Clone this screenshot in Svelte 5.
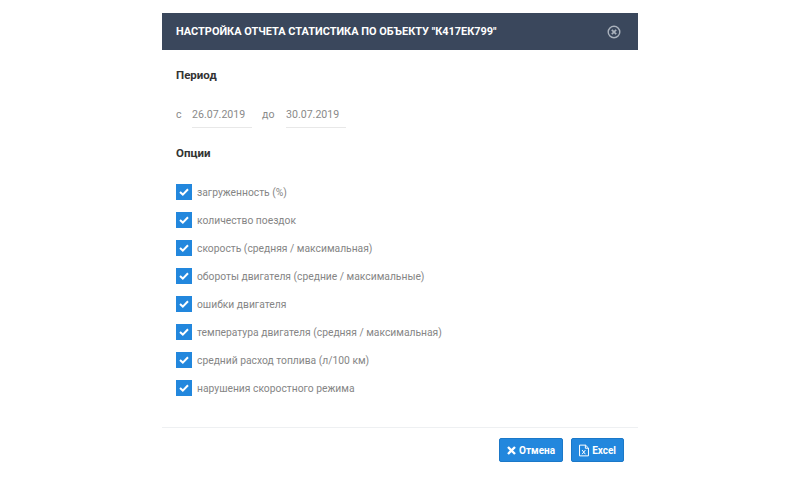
<script>
  const options = [
    'загруженность (%)',
    'количество поездок',
    'скорость (средняя / максимальная)',
    'обороты двигателя (средние / максимальные)',
    'ошибки двигателя',
    'температура двигателя (средняя / максимальная)',
    'средний расход топлива (л/100 км)',
    'нарушения скоростного режима'
  ];
</script>

<div class="page">
  <section class="modal">
    <header>
      <h1>НАСТРОЙКА ОТЧЕТА СТАТИСТИКА ПО ОБЪЕКТУ "К417ЕК799"</h1>
      <svg class="close" width="14" height="14" viewBox="0 0 14 14" fill="none" stroke="#aab2bd" stroke-width="1.4">
        <circle cx="7" cy="7" r="5.8"/>
        <path d="M4.8 4.8l4.4 4.4M9.2 4.8l-4.4 4.4" stroke-width="1.7"/>
      </svg>
    </header>

    <div class="body">
      <h2>Период</h2>
      <div class="period">
        <span class="lbl">с</span>
        <span class="date">26.07.2019</span>
        <span class="lbl to">до</span>
        <span class="date">30.07.2019</span>
      </div>

      <h2 class="opts">Опции</h2>
      <ul>
        {#each options as option}
          <li>
            <span class="check">
              <svg width="10" height="8" viewBox="0 0 10 8" fill="none" stroke="#fff" stroke-width="2">
                <path d="M1 4l2.8 2.6L9 1.2"/>
              </svg>
            </span>
            {option}
          </li>
        {/each}
      </ul>
    </div>

    <footer>
      <button>
        <svg width="9" height="9" viewBox="0 0 9 9" stroke="#fff" stroke-width="2.4"><path d="M1 1l7 7M8 1l-7 7"/></svg>
        Отмена
      </button>
      <button class="excel">
        <svg width="10" height="13" viewBox="0 0 11 13" fill="none" stroke="#fff" stroke-width="1.1">
          <path d="M.6.6h6.6l3.2 3.2v8.6H.6z"/>
          <path d="M7 .6v3.4h3.4M3.4 6l3.6 4.6M7 6l-3.6 4.6"/>
        </svg>
        Excel
      </button>
    </footer>
  </section>
</div>

<style>
  :global(body) {
    background: #fff;
  }

  .page {
    display: flex;
    justify-content: center;
    height: 479px;
    padding-top: 13px;
    box-sizing: border-box;
    font-family: Roboto, sans-serif;
    overflow: hidden;
  }

  .modal {
    width: 476px;
  }

  header {
    height: 37px;
    background: #3a475c;
    display: flex;
    align-items: center;
    justify-content: space-between;
    padding: 0 17px 0 14px;
  }

  h1 {
    margin: 0;
    color: #fff;
    font-size: 10.95px;
    font-weight: 700;
    white-space: nowrap;
  }

  .body {
    padding: 17px 14px 0;
    height: 378px;
    box-sizing: border-box;
    border-bottom: 1px solid #eef0f2;
  }

  h2 {
    margin: 0;
    font-size: 11.5px;
    line-height: 16px;
    font-weight: 700;
    color: #333;
  }

  .period {
    display: flex;
    align-items: flex-start;
    margin-top: 23px;
    font-size: 10.6px;
    color: #8a8a8a;
    height: 23px;
  }

  .lbl {
    line-height: 17px;
    width: 16px;
  }

  .to {
    width: 24px;
    margin-left: 10px;
  }

  .date {
    width: 60px;
    height: 21px;
    line-height: 17px;
    border-bottom: 1px solid #e8e8e8;
  }

  .opts {
    margin-top: 16px;
  }

  ul {
    list-style: none;
    margin: 23px 0 0;
    padding: 0;
  }

  li {
    display: flex;
    align-items: center;
    gap: 5px;
    height: 16px;
    margin-bottom: 12px;
    font-size: 10.3px;
    color: #858585;
    white-space: nowrap;
  }

  .check {
    width: 16px;
    height: 16px;
    background: #2287dd;
    display: flex;
    align-items: center;
    justify-content: center;
    flex-shrink: 0;
  }

  footer {
    display: flex;
    justify-content: flex-end;
    gap: 8px;
    padding: 10px 14px 0 0;
  }

  button {
    height: 24px;
    padding: 0 7px;
    background: #2287dd;
    border: 1px solid #1b78c8;
    border-radius: 2px;
    color: #fff;
    font-family: Roboto, sans-serif;
    font-size: 10px;
    font-weight: 700;
    display: flex;
    align-items: center;
    gap: 3px;
  }
</style>
